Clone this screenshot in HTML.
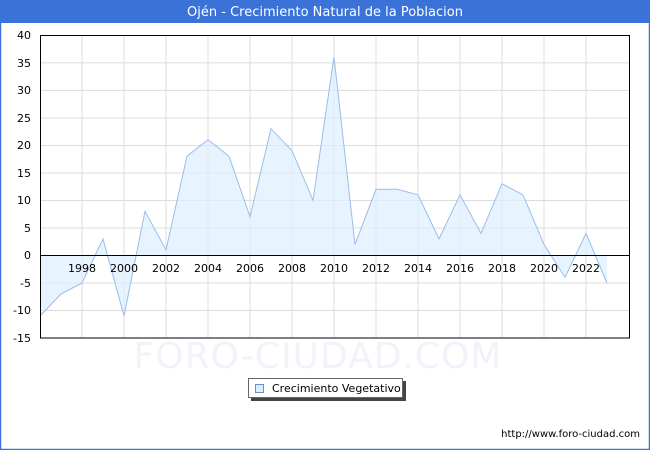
<!DOCTYPE html>
<html><head><meta charset="utf-8"><style>
body{margin:0;width:650px;height:450px;overflow:hidden;background:#fff;font-family:"Liberation Sans","DejaVu Sans",sans-serif}
</style></head><body>
<svg width="650" height="450" xmlns="http://www.w3.org/2000/svg" font-family="DejaVu Sans, Liberation Sans, sans-serif">
<rect x="0.5" y="0.5" width="649" height="449" fill="#fff" stroke="#3a72d8" stroke-width="1.5"/>
<rect x="0" y="0" width="650" height="23" fill="#3a72d8"/>
<text x="325" y="16" text-anchor="middle" fill="#fff" font-size="13">Ojén - Crecimiento Natural de la Poblacion</text>
<g stroke="#dcdcdc" stroke-width="1">
<line x1="40" y1="62.9" x2="630" y2="62.9"/><line x1="40" y1="90.4" x2="630" y2="90.4"/><line x1="40" y1="118" x2="630" y2="118"/><line x1="40" y1="145.5" x2="630" y2="145.5"/><line x1="40" y1="173" x2="630" y2="173"/><line x1="40" y1="200.5" x2="630" y2="200.5"/><line x1="40" y1="228" x2="630" y2="228"/><line x1="40" y1="283" x2="630" y2="283"/><line x1="40" y1="310.5" x2="630" y2="310.5"/>
<line x1="82" y1="35" x2="82" y2="338"/><line x1="124" y1="35" x2="124" y2="338"/><line x1="166" y1="35" x2="166" y2="338"/><line x1="208" y1="35" x2="208" y2="338"/><line x1="250" y1="35" x2="250" y2="338"/><line x1="292" y1="35" x2="292" y2="338"/><line x1="334" y1="35" x2="334" y2="338"/><line x1="376" y1="35" x2="376" y2="338"/><line x1="418" y1="35" x2="418" y2="338"/><line x1="460" y1="35" x2="460" y2="338"/><line x1="502" y1="35" x2="502" y2="338"/><line x1="544" y1="35" x2="544" y2="338"/><line x1="586" y1="35" x2="586" y2="338"/>
</g>
<text x="318" y="368" text-anchor="middle" font-size="36" fill="#f2f3fa" letter-spacing="1">FORO-CIUDAD.COM</text>
<polygon fill="#ddeeff" fill-opacity="0.7" stroke="none" points="40,255.4 40,316 61,294 82,283 103,238.9 124,316 145,211.3 166,249.9 187,156.2 208,139.7 229,156.2 250,216.8 271,128.7 292,150.7 313,200.3 334,57 355,244.4 376,189.3 397,189.3 418,194.8 439,238.9 460,194.8 481,233.4 502,183.8 523,194.8 544,244.4 565,277.4 586,233.4 607,283 607,255.4"/>
<polyline fill="none" stroke="#9bbde8" stroke-width="1" points="40,316 61,294 82,283 103,238.9 124,316 145,211.3 166,249.9 187,156.2 208,139.7 229,156.2 250,216.8 271,128.7 292,150.7 313,200.3 334,57 355,244.4 376,189.3 397,189.3 418,194.8 439,238.9 460,194.8 481,233.4 502,183.8 523,194.8 544,244.4 565,277.4 586,233.4 607,283"/>
<line x1="40" y1="255.5" x2="630" y2="255.5" stroke="#000"/>
<rect x="40.5" y="35.5" width="589" height="302.5" fill="none" stroke="#000"/>
<g font-size="11" fill="#000" text-anchor="end">
<text x="31" y="39">40</text><text x="31" y="67">35</text><text x="31" y="94">30</text><text x="31" y="122">25</text><text x="31" y="149">20</text><text x="31" y="177">15</text><text x="31" y="204">10</text><text x="31" y="232">5</text><text x="31" y="259">0</text><text x="31" y="287">-5</text><text x="31" y="314">-10</text><text x="31" y="342">-15</text>
</g>
<g font-size="11" fill="#000" text-anchor="middle">
<text x="82" y="272">1998</text><text x="124" y="272">2000</text><text x="166" y="272">2002</text><text x="208" y="272">2004</text><text x="250" y="272">2006</text><text x="292" y="272">2008</text><text x="334" y="272">2010</text><text x="376" y="272">2012</text><text x="418" y="272">2014</text><text x="460" y="272">2016</text><text x="502" y="272">2018</text><text x="544" y="272">2020</text><text x="586" y="272">2022</text>
</g>
<rect x="251" y="381" width="155" height="20" fill="#444"/>
<rect x="248.5" y="378.5" width="154" height="19" fill="#fff" stroke="#666"/>
<rect x="255.5" y="384.5" width="8" height="8" fill="#ddeeff" stroke="#6a8fd0"/>
<text x="272" y="392" font-size="11">Crecimiento Vegetativo</text>
<text x="640" y="437" font-size="10" text-anchor="end">http://www.foro-ciudad.com</text>
</svg>
</body></html>
